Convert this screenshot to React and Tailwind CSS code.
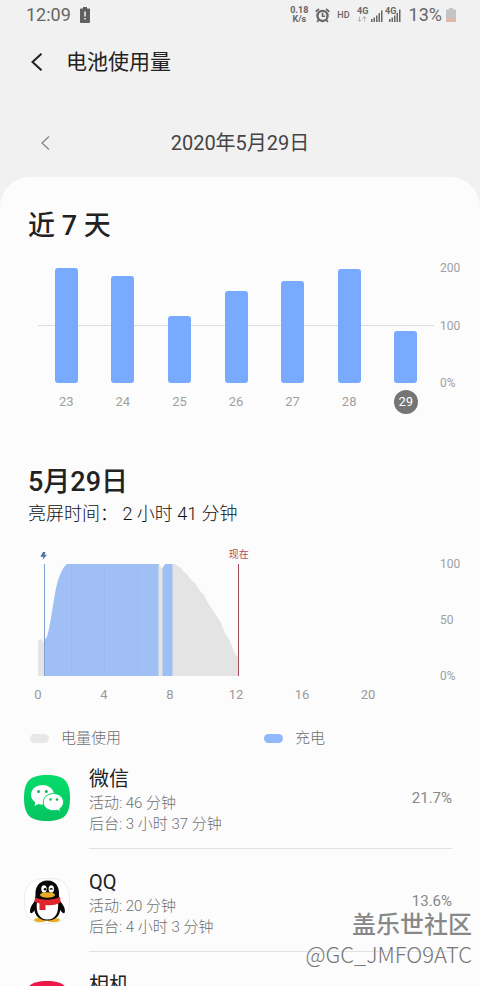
import React from "react";

const FONT = "font-[Roboto,'Noto_Sans_CJK_SC',sans-serif]";

const days = [
  { day: 23, value: 200 },
  { day: 24, value: 186 },
  { day: 25, value: 117 },
  { day: 26, value: 160 },
  { day: 27, value: 178 },
  { day: 28, value: 198 },
  { day: 29, value: 91 },
];

function StatusBar() {
  return (
    <div className="flex h-[30px] shrink-0 items-center justify-between pl-[26px] pr-6 text-lg leading-5 text-[#666]">
      <div className="flex items-center gap-[9px]">
        <span>12:09</span>
        <svg width="10" height="16" viewBox="0 0 10 16" aria-hidden="true">
          <path d="M3 0h4v1.500h2q1 0 1 1V15q0 1-1 1H1q-1 0-1-1V2.500q0-1 1-1h2z" fill="#606060" />
          <path d="M4.300 4.500h1.400v5H4.300zM4.300 11h1.400v1.500H4.300z" fill="#fff" />
        </svg>
      </div>
      <div className="flex items-center">
        <div className="mr-[7px] text-center text-[9px] font-bold leading-[9px]">
          <div>0.18</div>
          <div>K/s</div>
        </div>
        <svg className="mr-[7px]" width="15" height="15" viewBox="0 0 14 14" aria-hidden="true">
          <path d="M.7 3.500 3.700.8M13.300 3.500 10.300.8" stroke="#666" strokeWidth="1.700" />
          <circle cx="7" cy="7.400" r="4.700" fill="none" stroke="#666" strokeWidth="2.200" />
          <path d="M7 4.500v3.200h2.500M3.500 11l-1.500 2M10.500 11l1.500 2" fill="none" stroke="#666" strokeWidth="1.600" />
        </svg>
        <span className="mr-1.5 text-[9px] font-medium leading-none">HD</span>
        <svg width="46" height="18" viewBox="0 0 46 18" className="mr-[7px]" aria-hidden="true">
          <g fill="#666">
            <path d="M15 13h1.500v3H15zM17.500 11.500H19V16h-1.500zM20 9.500h1.500V16H20zM22.500 7H24v9h-1.500zM25 4.500h1.500V16H25z" />
            <path d="M33 13h1.500v3H33zM35.500 11.500H37V16h-1.500zM38 9.500h1.500V16H38zM40.500 7H42v9h-1.500zM43 3.500h1.500V16H43z" />
            <text x="1" y="8" className="text-[9px] font-bold">4G</text>
            <text x="29" y="8" className="text-[9px] font-bold">4G</text>
          </g>
          <path d="M3.500 10.500v5M1.500 13.500l2 2 2-2M8.500 15.500v-5M6.500 12.500l2-2 2 2" fill="none" stroke="#b5b5b5" />
        </svg>
        <span className="mr-1">13%</span>
        <svg width="10" height="14" viewBox="0 0 10 14" aria-hidden="true">
          <path d="M3 0h4v1.500h3V14H0V1.500h3z" fill="#c3c3c3" />
          <path d="M0 10.500h10V14H0z" fill="#e3b5a5" />
        </svg>
      </div>
    </div>
  );
}

function WeekChart() {
  return (
    <div className="mt-[25px] flex pl-[38px] pr-4">
      <div className="flex-1">
        <div className="flex h-[115px] items-end bg-[linear-gradient(#dcdcdc,#dcdcdc)] bg-[length:100%_1px] bg-[position:0_57px] bg-no-repeat">
          {days.map((d) => (
            <div key={d.day} className="flex h-full flex-1 items-end justify-center">
              <div className="w-[23px] rounded-[3px] bg-[#78aaff]" style={{ height: `${d.value / 2}%` }} />
            </div>
          ))}
        </div>
        <div className="mt-[7px] flex text-[13px] leading-6 text-[#a0a0a0]">
          {days.map((d) => (
            <div key={d.day} className="flex flex-1 justify-center">
              <span className={d.day === 29 ? "w-6 rounded-full bg-[#757575] text-center text-white" : ""}>{d.day}</span>
            </div>
          ))}
        </div>
      </div>
      <div className="-my-2 flex h-[131px] w-[30px] flex-col justify-between pl-1.5 text-xs leading-4 text-[#a0a0a0]">
        <span>200</span>
        <span>100</span>
        <span>0%</span>
      </div>
    </div>
  );
}

function DayChart() {
  return (
    <div className="mt-[38px] flex pl-[38px] pr-4">
      <div className="flex-1">
        <div className="relative">
          <svg className="absolute -top-3 left-[0.5%]" width="7" height="8" viewBox="0 0 7 8" aria-hidden="true">
            <path d="M3 0h2.500L4.500 2.700H7L2.500 8l.8-3.200H.3z" fill="#4d73a8" />
          </svg>
          <span className="absolute -top-[15px] left-[50.700%] -translate-x-1/2 text-[10px] leading-3 text-[#b0485a]">现在</span>
          <svg className="block h-28 w-full" viewBox="0 0 396 112" preserveAspectRatio="none" role="img" aria-label="电量使用">
            <path d="M0 112V77L3 75L7 80V112Z" fill="#e4e4e4" />
            <path d="M7 112V75L9 73C14 57 16 24 22 11Q25 3 29 0H121V112Z" fill="#9fbff5" />
            <path d="M120.500 112V0L124 4H125V112Z" fill="#e4e4e4" />
            <path d="M124.500 112V4L127 0H135V112Z" fill="#9fbff5" />
            <path d="M134.500 112V0H137L143 4L146 8L149 10L153 16L157 19L162 27L166 31L170 39L176 48L182 57L187 69L192 77L196 88L201 95V112Z" fill="#e4e4e4" />
            <path d="M33.500 0V112M66.500 0V112M99.500 0V112M132.500 0V112" stroke="#9abaf2" strokeWidth="1" />
            <path d="M6.500 0V112" stroke="#7f9fd3" strokeWidth="1" />
            <path d="M200.500 0V112" stroke="#a3495a" strokeWidth="1" />
          </svg>
        </div>
        <div className="mt-[11px] grid grid-cols-6 text-[13px] leading-4 text-[#999]">
          {[0, 4, 8, 12, 16, 20].map((h) => (
            <span key={h} className="flex w-0 justify-center">{h}</span>
          ))}
        </div>
      </div>
      <div className="-my-2 flex h-32 w-[30px] flex-col justify-between pl-1.5 text-xs leading-4 text-[#a0a0a0]">
        <span>100</span>
        <span>50</span>
        <span>0%</span>
      </div>
    </div>
  );
}

function WeChatIcon() {
  return (
    <svg width="46" height="46" viewBox="0 0 46 46" aria-hidden="true">
      <defs>
        <linearGradient id="wechat" x1="0" y1="0" x2="0" y2="1">
          <stop offset="0" stopColor="#04dc6c" />
          <stop offset="1" stopColor="#06c45f" />
        </linearGradient>
      </defs>
      <path d="M23 0C40 0 46 6 46 23S40 46 23 46 0 40 0 23 6 0 23 0Z" fill="url(#wechat)" />
      <path d="M18.500 10C12 10 7 14.300 7 19.800c0 3.200 1.700 5.800 4.300 7.600L10.500 31l3.800-2c1.500.5 3 .6 4.800.6C25.500 29.500 30 25.200 30 19.800S25 10 18.500 10Z" fill="#fff" />
      <path d="M29.500 18.500c-5.700 0-10.200 3.700-10.200 8.600s4.500 8.600 10.200 8.600c1.300 0 2.600-.2 3.700-.6l3.300 1.700-.8-3c2.400-1.500 3.900-3.900 3.900-6.700 0-4.900-4.400-8.600-10.100-8.600Z" fill="#fff" stroke="#05cf66" strokeWidth="1" />
      <g fill="#07b95a"><circle cx="14.500" cy="16.600" r="1.500" /><circle cx="22.300" cy="16.600" r="1.500" /><circle cx="26.500" cy="24.500" r="1.250" /><circle cx="33" cy="24.500" r="1.250" /></g>
    </svg>
  );
}

function QQIcon() {
  return (
    <svg width="46" height="46" viewBox="0 0 46 46" aria-hidden="true">
      <path d="M23 .5C39.500.5 45.500 6.500 45.500 23S39.500 45.500 23 45.500.5 39.500.5 23 6.500.5 23 .5Z" fill="#fff" stroke="#ececec" />
      <ellipse cx="16.500" cy="42" rx="6.500" ry="2.200" fill="#e8ae24" />
      <ellipse cx="29.500" cy="42" rx="6.500" ry="2.200" fill="#e8ae24" />
      <path d="M12 22C7 27 5 32 6.500 35c1 1 3-1 4.500-3.500ZM35 22c5 5 7 10 5.500 13-1 1-3-1-4.500-3.500Z" fill="#080808" />
      <path d="M23.500 2.500C15 2.500 11 9 11.500 17l-1 8C8.500 36 14 42.500 23.500 42.500S38 36 36 25l-1-8C35.500 9 32 2.500 23.500 2.500Z" fill="#080808" />
      <path d="M13 24C11.500 34 15 41.500 23.500 41.500S35 34 34 24Z" fill="#fff" />
      <path d="M11 19.500c8 3 17 3 25-.5l.7 5.500C31 27.500 26 27.500 21.500 27V32h-6v-6.500L10.500 24Z" fill="#e0252b" />
      <ellipse cx="20" cy="11" rx="2.700" ry="3.700" fill="#fff" />
      <ellipse cx="27.300" cy="11" rx="2.700" ry="3.700" fill="#fff" />
      <circle cx="21" cy="11.300" r="1.200" fill="#080808" />
      <path d="M25.800 11.500q1.300-1.700 2.700 0" fill="none" stroke="#080808" strokeWidth="1.200" />
      <ellipse cx="23.500" cy="17" rx="7.500" ry="2.700" fill="#edaa25" />
    </svg>
  );
}

function CameraIcon() {
  return (
    <svg width="46" height="46" viewBox="0 0 46 46" aria-hidden="true">
      <path d="M23 0C40 0 46 6 46 23S40 46 23 46 0 40 0 23 6 0 23 0Z" fill="#ed1849" />
      <path d="M10 16h6l3-4h8l3 4h6v18H10z" fill="#fff" />
      <circle cx="23" cy="25" r="6" fill="#ed1849" />
    </svg>
  );
}

const apps = [
  { name: "微信", Icon: WeChatIcon, details: ["活动: 46 分钟", "后台: 3 小时 37 分钟"], percent: "21.7%" },
  { name: "QQ", Icon: QQIcon, details: ["活动: 20 分钟", "后台: 4 小时 3 分钟"], percent: "13.6%" },
  { name: "相机", Icon: CameraIcon, details: [], percent: "" },
];

function AppRow({ app }) {
  const { Icon } = app;
  return (
    <li className="flex pl-6 pr-7">
      <div className="mr-[19px] flex items-center"><Icon /></div>
      <div className="flex h-[103px] flex-1 items-center justify-between border-b border-[#e2e2e2] text-[15px] leading-[21px] text-[#888]">
        <div className="self-start pt-[19px] font-light text-[#707070]">
          <h3 className="text-xl font-normal leading-7 text-[#222]">{app.name}</h3>
          {app.details.map((line) => <p key={line}>{line}</p>)}
        </div>
        <span className="pt-0.5">{app.percent}</span>
      </div>
    </li>
  );
}

export default function App() {
  return (
    <div className={`relative flex h-screen flex-col overflow-hidden bg-[#f1f1f1] ${FONT}`}>
      <StatusBar />
      <header className="flex h-[63px] shrink-0 items-center gap-[23px] pl-[31px]">
        <button aria-label="返回">
          <svg width="12" height="18" viewBox="0 0 12 18" fill="none" aria-hidden="true">
            <path d="M10.500 .7 1.500 9l9 8.300" stroke="#222" strokeWidth="2" />
          </svg>
        </button>
        <h1 className="text-[21px] leading-7 text-[#222]">电池使用量</h1>
      </header>
      <div className="grid h-[84px] shrink-0 grid-cols-[1fr_auto_1fr] items-center pt-4">
        <button aria-label="前一天" className="justify-self-start pl-[41px]">
          <svg width="9" height="14" viewBox="0 0 9 14" fill="none" aria-hidden="true">
            <path d="M8 .5 1 7l7 6.500" stroke="#888" strokeWidth="1.300" />
          </svg>
        </button>
        <span className="text-[20px] leading-7 text-[#444]">2020年5月29日</span>
      </div>
      <main className="min-h-0 flex-1 overflow-hidden rounded-t-[30px] bg-[#fcfcfc]">
        <h2 className="pl-7 pt-8 text-[27px] font-medium leading-[34px] text-[#222]">近 7 天</h2>
        <WeekChart />
        <h2 className="mt-[51px] pl-7 text-[27px] font-medium leading-[34px] text-[#222]">5月29日</h2>
        <p className="mt-[3px] pl-7 text-lg font-light leading-6 text-[#111]">亮屏时间： 2 小时 41 分钟</p>
        <DayChart />
        <div className="mt-[27px] grid grid-cols-2 text-[15px] font-light leading-4 text-[#707070]">
          <div className="flex items-center gap-3 pl-[30px]"><i className="h-[9px] w-[19px] rounded-full bg-[#e8e8e8]" />电量使用</div>
          <div className="flex items-center gap-3 pl-6"><i className="h-[9px] w-[19px] rounded-full bg-[#91b8fa]" />充电</div>
        </div>
        <ul>
          {apps.map((app) => <AppRow key={app.name} app={app} />)}
        </ul>
      </main>
      <div className="absolute bottom-[17px] right-2 text-right font-['Noto_Sans_CJK_SC',sans-serif] text-[#888]">
        <div className="text-[24px] font-medium leading-[31px] [text-shadow:0_-1px_0_#fff]">盖乐世社区</div>
        <div className="text-[22px] font-light leading-[31px] text-[#777] [text-shadow:0_-1px_0_#fff]">@GC_JMFO9ATC</div>
      </div>
    </div>
  );
}
